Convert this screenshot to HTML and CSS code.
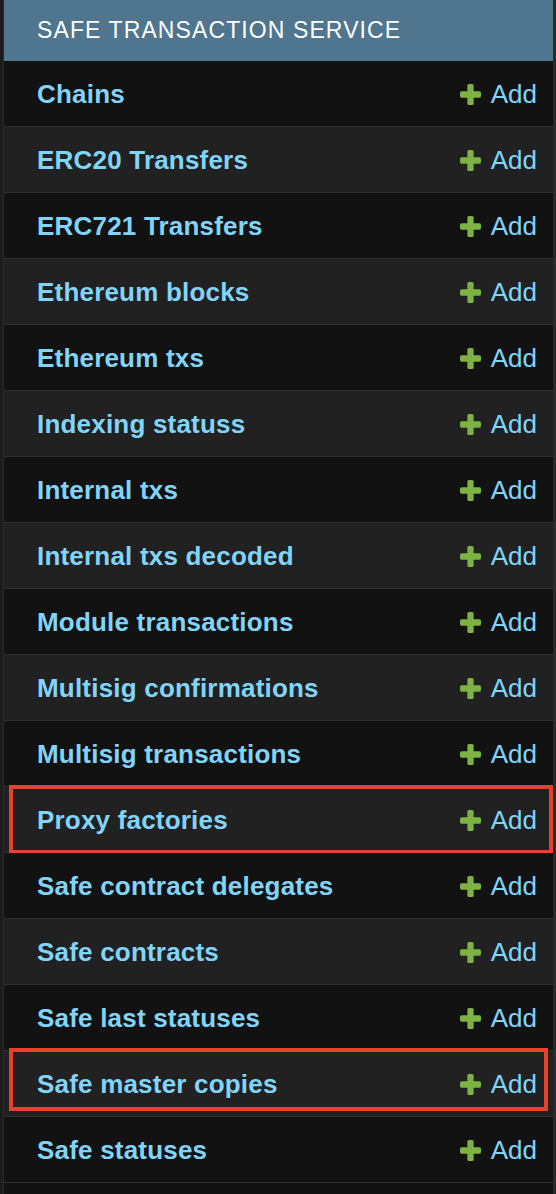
FILE: index.html
```html
<!DOCTYPE html>
<html lang="en">
<head>
<meta charset="utf-8">
<title>Safe Transaction Service</title>
<link rel="stylesheet" href="styles.css">
</head>
<body>
<div class="module">
  <div class="caption">Safe Transaction Service</div>
  <ul class="models">
    <li class="row"><a class="model" href="#">Chains</a><a class="add" href="#"><svg class="plus" viewBox="0 0 20 20"><rect x="7" y="0" width="6" height="20" rx="1.5"/><rect x="0" y="7" width="20" height="6" rx="1.5"/></svg>Add</a></li>
    <li class="row"><a class="model" href="#">ERC20 Transfers</a><a class="add" href="#"><svg class="plus" viewBox="0 0 20 20"><rect x="7" y="0" width="6" height="20" rx="1.5"/><rect x="0" y="7" width="20" height="6" rx="1.5"/></svg>Add</a></li>
    <li class="row"><a class="model" href="#">ERC721 Transfers</a><a class="add" href="#"><svg class="plus" viewBox="0 0 20 20"><rect x="7" y="0" width="6" height="20" rx="1.5"/><rect x="0" y="7" width="20" height="6" rx="1.5"/></svg>Add</a></li>
    <li class="row"><a class="model" href="#">Ethereum blocks</a><a class="add" href="#"><svg class="plus" viewBox="0 0 20 20"><rect x="7" y="0" width="6" height="20" rx="1.5"/><rect x="0" y="7" width="20" height="6" rx="1.5"/></svg>Add</a></li>
    <li class="row"><a class="model" href="#">Ethereum txs</a><a class="add" href="#"><svg class="plus" viewBox="0 0 20 20"><rect x="7" y="0" width="6" height="20" rx="1.5"/><rect x="0" y="7" width="20" height="6" rx="1.5"/></svg>Add</a></li>
    <li class="row"><a class="model" href="#">Indexing statuss</a><a class="add" href="#"><svg class="plus" viewBox="0 0 20 20"><rect x="7" y="0" width="6" height="20" rx="1.5"/><rect x="0" y="7" width="20" height="6" rx="1.5"/></svg>Add</a></li>
    <li class="row"><a class="model" href="#">Internal txs</a><a class="add" href="#"><svg class="plus" viewBox="0 0 20 20"><rect x="7" y="0" width="6" height="20" rx="1.5"/><rect x="0" y="7" width="20" height="6" rx="1.5"/></svg>Add</a></li>
    <li class="row"><a class="model" href="#">Internal txs decoded</a><a class="add" href="#"><svg class="plus" viewBox="0 0 20 20"><rect x="7" y="0" width="6" height="20" rx="1.5"/><rect x="0" y="7" width="20" height="6" rx="1.5"/></svg>Add</a></li>
    <li class="row"><a class="model" href="#">Module transactions</a><a class="add" href="#"><svg class="plus" viewBox="0 0 20 20"><rect x="7" y="0" width="6" height="20" rx="1.5"/><rect x="0" y="7" width="20" height="6" rx="1.5"/></svg>Add</a></li>
    <li class="row"><a class="model" href="#">Multisig confirmations</a><a class="add" href="#"><svg class="plus" viewBox="0 0 20 20"><rect x="7" y="0" width="6" height="20" rx="1.5"/><rect x="0" y="7" width="20" height="6" rx="1.5"/></svg>Add</a></li>
    <li class="row"><a class="model" href="#">Multisig transactions</a><a class="add" href="#"><svg class="plus" viewBox="0 0 20 20"><rect x="7" y="0" width="6" height="20" rx="1.5"/><rect x="0" y="7" width="20" height="6" rx="1.5"/></svg>Add</a></li>
    <li class="row highlighted hl-a"><a class="model" href="#">Proxy factories</a><a class="add" href="#"><svg class="plus" viewBox="0 0 20 20"><rect x="7" y="0" width="6" height="20" rx="1.5"/><rect x="0" y="7" width="20" height="6" rx="1.5"/></svg>Add</a></li>
    <li class="row"><a class="model" href="#">Safe contract delegates</a><a class="add" href="#"><svg class="plus" viewBox="0 0 20 20"><rect x="7" y="0" width="6" height="20" rx="1.5"/><rect x="0" y="7" width="20" height="6" rx="1.5"/></svg>Add</a></li>
    <li class="row"><a class="model" href="#">Safe contracts</a><a class="add" href="#"><svg class="plus" viewBox="0 0 20 20"><rect x="7" y="0" width="6" height="20" rx="1.5"/><rect x="0" y="7" width="20" height="6" rx="1.5"/></svg>Add</a></li>
    <li class="row"><a class="model" href="#">Safe last statuses</a><a class="add" href="#"><svg class="plus" viewBox="0 0 20 20"><rect x="7" y="0" width="6" height="20" rx="1.5"/><rect x="0" y="7" width="20" height="6" rx="1.5"/></svg>Add</a></li>
    <li class="row highlighted hl-b"><a class="model" href="#">Safe master copies</a><a class="add" href="#"><svg class="plus" viewBox="0 0 20 20"><rect x="7" y="0" width="6" height="20" rx="1.5"/><rect x="0" y="7" width="20" height="6" rx="1.5"/></svg>Add</a></li>
    <li class="row"><a class="model" href="#">Safe statuses</a><a class="add" href="#"><svg class="plus" viewBox="0 0 20 20"><rect x="7" y="0" width="6" height="20" rx="1.5"/><rect x="0" y="7" width="20" height="6" rx="1.5"/></svg>Add</a></li>
  </ul>
</div>
</body>
</html>
```

FILE: styles.css
```css
html, body {
  margin: 0;
  padding: 0;
}

body {
  background: #1c1c1c;
  font-family: "Liberation Sans", Arial, sans-serif;
  padding-left: 3px;
}

.module {
  background: #121212;
  border-left: 1px solid #2c2c2c;
  border-right: 3px solid #2a2a2a;
  min-height: 100vh;
  box-sizing: border-box;
}

.caption {
  height: 61px;
  box-sizing: border-box;
  background: #50768f;
  color: #ffffff;
  text-transform: uppercase;
  font-size: 23px;
  letter-spacing: 1.1px;
  line-height: 61px;
  padding-left: 33px;
}

.models {
  list-style: none;
  margin: 0;
  padding: 0;
}

.row {
  position: relative;
  display: flex;
  align-items: center;
  justify-content: space-between;
  height: 66px;
  box-sizing: border-box;
  border-bottom: 1px solid #2e2e2e;
  padding: 2px 16px 0 33px;
  background: #121212;
}

.row:nth-child(even) {
  background: #212121;
}

.model {
  color: #81d4fa;
  font-weight: bold;
  font-size: 26px;
  letter-spacing: 0.2px;
  text-decoration: none;
}

.add {
  display: flex;
  align-items: center;
  gap: 10px;
  color: #81d4fa;
  font-size: 26px;
  text-decoration: none;
}

.plus {
  width: 21px;
  height: 21px;
  fill: #7cb342;
}

.highlighted::after {
  content: "";
  position: absolute;
  border: 4px solid #e5412d;
  pointer-events: none;
}

.hl-a::after {
  left: 5px;
  right: 0;
  top: -2px;
  bottom: -2px;
}

.hl-b::after {
  left: 5px;
  right: 5px;
  top: -3px;
  bottom: 5px;
}
```
